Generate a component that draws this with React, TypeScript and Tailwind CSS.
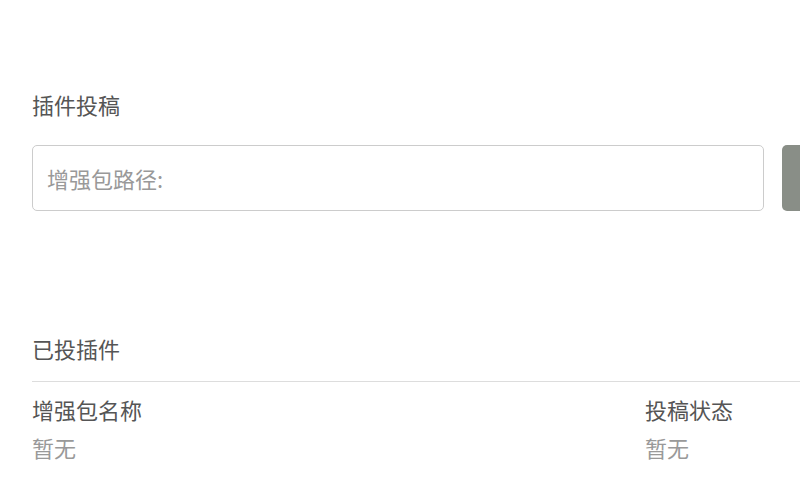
import React from "react";

export default function App() {
  const font = { fontFamily: '"Noto Sans CJK SC", "Noto Sans", sans-serif' };
  return (
    <div className="w-[800px] h-[503px] overflow-hidden bg-white" style={font}>
      <div className="w-[1300px] pl-8 pt-[89px]">
        <div className="text-[22px] leading-[30px] text-[#555]">插件投稿</div>
        <div className="mt-[26px] flex gap-[18px]">
          <input
            className="w-[732px] h-[66px] border border-[#cccccc] rounded-[5px] px-[14px] text-[22px] text-[#555] placeholder:text-[#999] outline-none bg-white"
            placeholder="增强包路径:"
          />
          <button className="w-[120px] h-[66px] rounded-[5px] bg-[#898e87]" />
        </div>
        <div className="mt-[122px] text-[22px] leading-[30px] text-[#555]">已投插件</div>
        <div className="mt-[18px] border-t border-[#dddddd] pt-[8px] flex text-[22px] leading-[38px]">
          <div className="w-[613px]">
            <div className="text-[#555]">增强包名称</div>
            <div className="text-[#999]">暂无</div>
          </div>
          <div className="w-[613px]">
            <div className="text-[#555]">投稿状态</div>
            <div className="text-[#999]">暂无</div>
          </div>
        </div>
      </div>
    </div>
  );
}
